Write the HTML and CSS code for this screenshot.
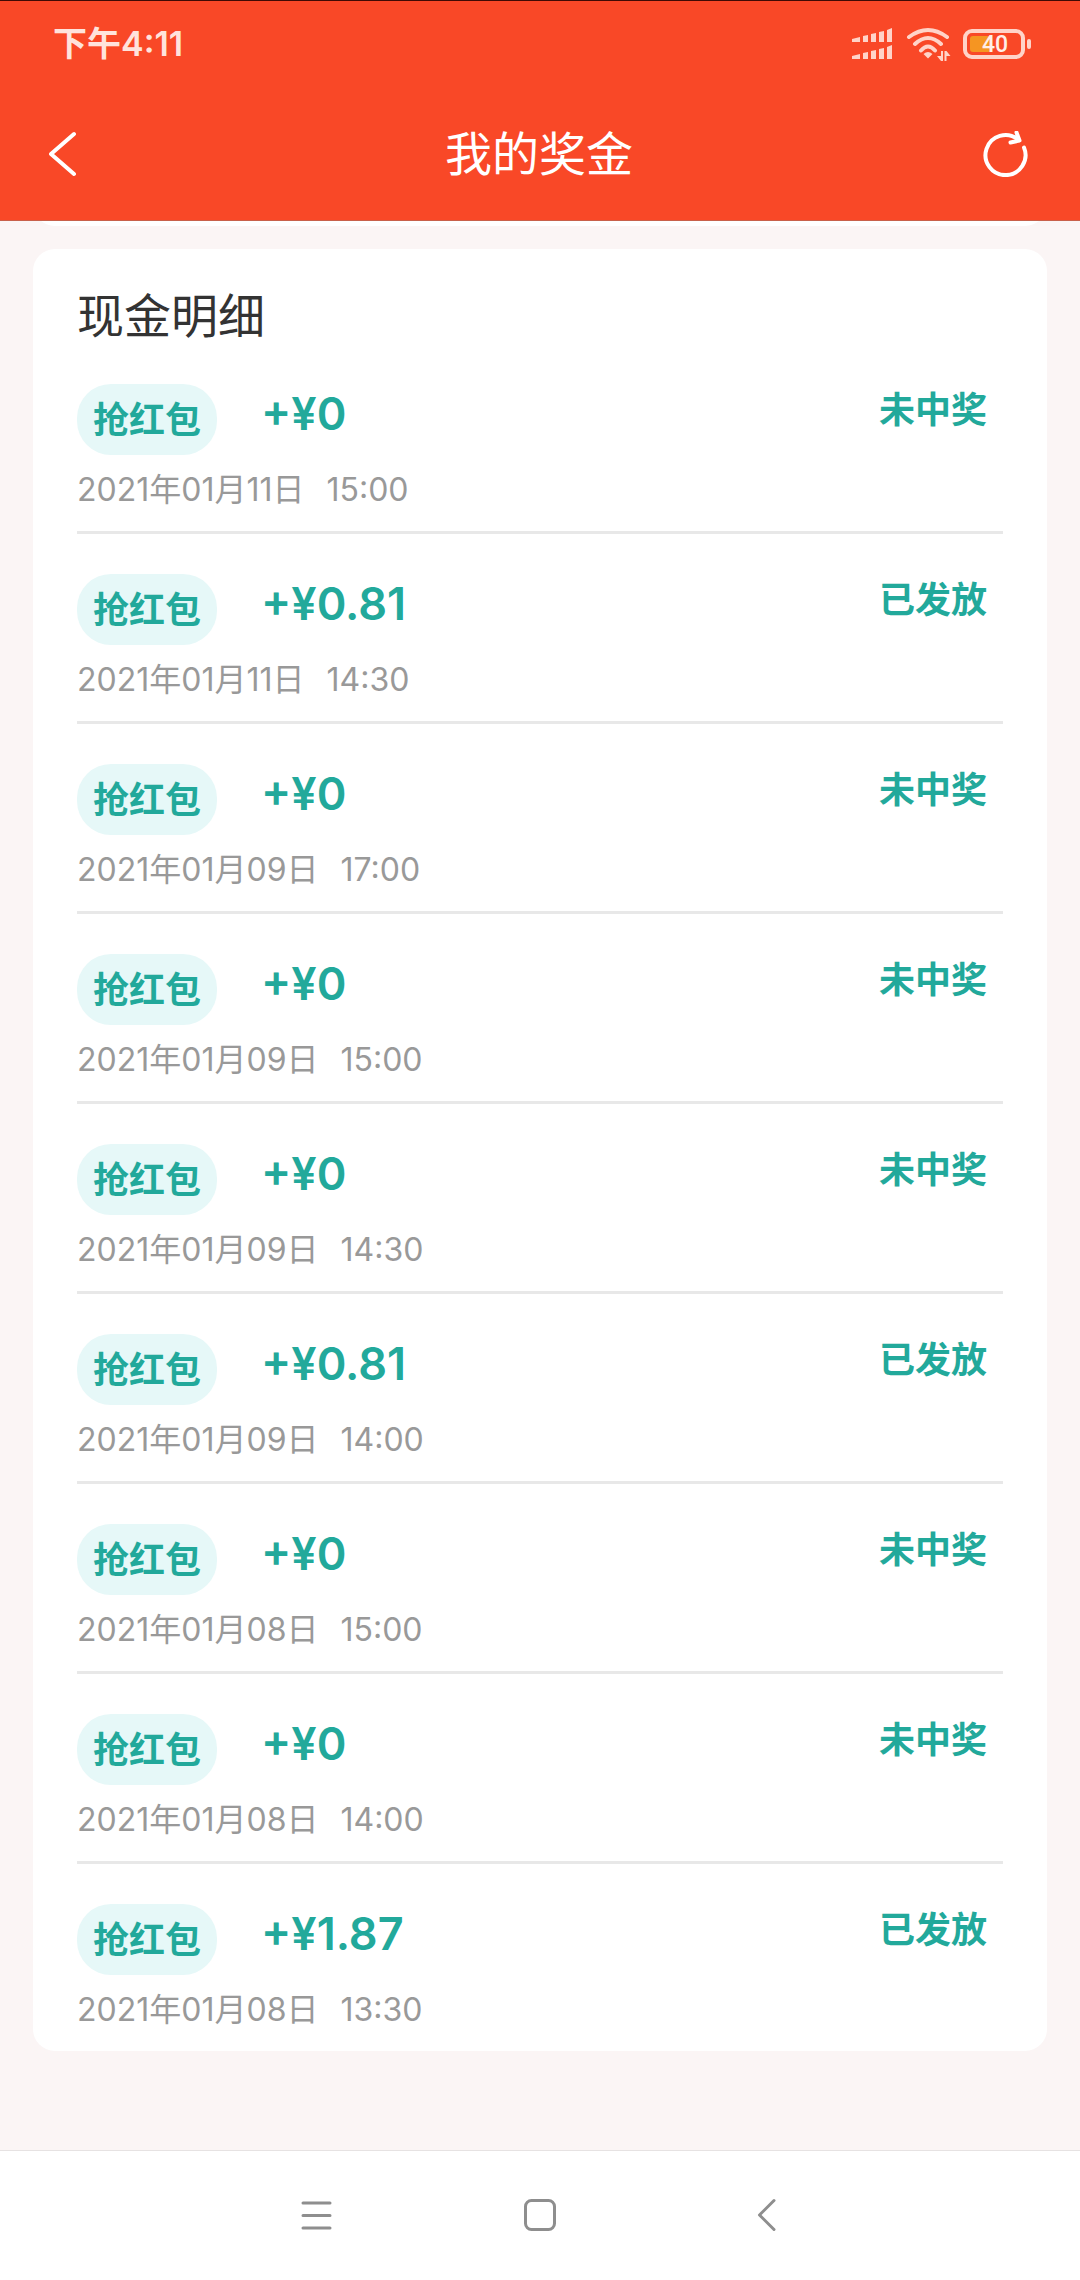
FILE: index.html
```html
<!DOCTYPE html>
<html lang="zh-CN">
<head>
<meta charset="utf-8">
<meta name="viewport" content="width=device-width, initial-scale=1">
<title>我的奖金</title>
<link rel="stylesheet" href="styles.css">
</head>
<body>
<header class="header">
  <div class="statusbar">
    <span class="clock">下午4:11</span>
    <div class="indicators">
      <svg class="signal" width="42" height="32" viewBox="0 0 42 32" aria-hidden="true">
        <path d="M0 11l8-2v5H0zM11 8l5-1v7h-5zM19 6l5-1v9h-5zM27 4l5-1v11h-5zM35 2l5-2v14h-5zM0 28l8-2v5H0zM11 25l5-1v7h-5zM19 23l5-1v9h-5zM27 21l5-1v11h-5zM35 19l5-2v14h-5z"/>
      </svg>
      <svg class="wifi" width="45" height="34" viewBox="0 0 45 34" aria-hidden="true">
        <path d="M3 10Q22-4 41 10M9 17Q22 5 35 17M15 23.500Q22 15.500 29 23.500"/>
        <path class="solid" d="M17.500 27Q22 23 26.500 27L22 31.500zM37 24v10h-2l-4-5h4v-5zM38.500 24h2l4 5h-4v5h-2z"/>
      </svg>
      <svg class="battery" width="70" height="32" viewBox="0 0 70 32" role="img" aria-label="40%">
        <rect class="shell" x="2" y="3" width="58" height="26" rx="7"/>
        <rect class="nub" x="64" y="11" width="4" height="10" rx="2"/>
        <path class="charge" d="M10 8h17v16H10q-3 0-3-3V11q0-3 3-3z"/>
        <text class="level" x="32" y="24" text-anchor="middle">40</text>
      </svg>
    </div>
  </div>
  <div class="appbar">
    <button class="iconbtn" type="button" aria-label="返回">
      <svg width="46" height="46" viewBox="0 0 46 46"><path d="M25 3L2 23L25 43"/></svg>
    </button>
    <h1 class="title">我的奖金</h1>
    <button class="iconbtn" type="button" aria-label="刷新">
      <svg width="46" height="46" viewBox="0 0 46 46"><path d="M41 16.500A20 20 0 1 1 35 8.500M33.500 1.500L36.500 9.500L27.500 11.500"/></svg>
    </button>
  </div>
</header>

<main class="content">
  <div class="peek"><div class="card summary"></div></div>
  <section class="card">
    <h2 class="heading">现金明细</h2>
    <ul class="records">
      <li class="record">
        <div class="line"><span class="tag">抢红包</span><strong class="amount">+¥0</strong><span class="state">未中奖</span></div>
        <p class="when"><span>2021年01月11日</span><span>15:00</span></p>
      </li>
      <li class="record">
        <div class="line"><span class="tag">抢红包</span><strong class="amount">+¥0.81</strong><span class="state">已发放</span></div>
        <p class="when"><span>2021年01月11日</span><span>14:30</span></p>
      </li>
      <li class="record">
        <div class="line"><span class="tag">抢红包</span><strong class="amount">+¥0</strong><span class="state">未中奖</span></div>
        <p class="when"><span>2021年01月09日</span><span>17:00</span></p>
      </li>
      <li class="record">
        <div class="line"><span class="tag">抢红包</span><strong class="amount">+¥0</strong><span class="state">未中奖</span></div>
        <p class="when"><span>2021年01月09日</span><span>15:00</span></p>
      </li>
      <li class="record">
        <div class="line"><span class="tag">抢红包</span><strong class="amount">+¥0</strong><span class="state">未中奖</span></div>
        <p class="when"><span>2021年01月09日</span><span>14:30</span></p>
      </li>
      <li class="record">
        <div class="line"><span class="tag">抢红包</span><strong class="amount">+¥0.81</strong><span class="state">已发放</span></div>
        <p class="when"><span>2021年01月09日</span><span>14:00</span></p>
      </li>
      <li class="record">
        <div class="line"><span class="tag">抢红包</span><strong class="amount">+¥0</strong><span class="state">未中奖</span></div>
        <p class="when"><span>2021年01月08日</span><span>15:00</span></p>
      </li>
      <li class="record">
        <div class="line"><span class="tag">抢红包</span><strong class="amount">+¥0</strong><span class="state">未中奖</span></div>
        <p class="when"><span>2021年01月08日</span><span>14:00</span></p>
      </li>
      <li class="record">
        <div class="line"><span class="tag">抢红包</span><strong class="amount">+¥1.87</strong><span class="state">已发放</span></div>
        <p class="when"><span>2021年01月08日</span><span>13:30</span></p>
      </li>
    </ul>
  </section>
</main>

<nav class="navbar" aria-label="系统导航">
  <button class="navbtn" type="button" aria-label="菜单">
    <svg width="36" height="36" viewBox="0 0 36 36"><path d="M6 5h27M6 17.500h27M6 30h27"/></svg>
  </button>
  <button class="navbtn" type="button" aria-label="主屏幕">
    <svg width="36" height="36" viewBox="0 0 36 36"><rect x="3.500" y="2.500" width="29" height="29" rx="6"/></svg>
  </button>
  <button class="navbtn" type="button" aria-label="返回">
    <svg width="36" height="36" viewBox="0 0 36 36"><path d="M27 2.500L12.500 17L27 31.500"/></svg>
  </button>
</nav>
</body>
</html>
```
FILE: styles.css
```css
* {
  box-sizing: border-box;
}

body {
  margin: 0;
  min-height: 100vh;
  display: flex;
  flex-direction: column;
  background: #fbf5f5;
  color: #333;
  font-family: Inter, "Noto Sans CJK SC", sans-serif;
}

h1, h2, p, ul {
  margin: 0;
  padding: 0;
}

button {
  margin: 0;
  padding: 0;
  border: 0;
  background: none;
}

svg {
  display: block;
  fill: none;
  stroke-linecap: round;
  stroke-linejoin: round;
}

.header {
  background: #f94827;
  border-top: 1px solid #400a04;
  border-bottom: 1px solid #c8604a;
  color: #fff;
}

.statusbar {
  display: flex;
  align-items: center;
  justify-content: space-between;
  height: 86px;
  padding: 0 47px 0 53px;
  color: #ffe3dc;
}

.clock {
  font-size: 34px;
  font-weight: 600;
  line-height: 40px;
}

.indicators {
  display: flex;
  align-items: center;
  gap: 12px;
}

.signal,
.nub {
  fill: #ffd3c8;
}

.wifi {
  stroke: #ffd3c8;
  stroke-width: 4;
}

.solid {
  fill: #ffd3c8;
  stroke: none;
}

.shell {
  stroke: #ffd3c8;
  stroke-width: 4;
}

.charge {
  fill: #f59522;
}

.level {
  fill: #ffeee8;
  font-family: Roboto, sans-serif;
  font-size: 23px;
  font-weight: 500;
}

.appbar {
  display: flex;
  align-items: center;
  justify-content: space-between;
  height: 133px;
  padding: 0 51px 0 49px;
}

.iconbtn svg {
  stroke: #fff;
  stroke-width: 4;
}

.title,
.heading {
  font-size: 47px;
  font-weight: 400;
  line-height: 56px;
}

.content {
  flex: 1;
  padding: 0 33px 97px;
}

.peek {
  display: flex;
  align-items: flex-end;
  height: 5px;
  margin-bottom: 23px;
  overflow: hidden;
}

.card {
  padding: 39px 44px 0;
  border-radius: 22px;
  background: #fff;
}

.summary {
  flex: 1;
  height: 60px;
}

.records {
  list-style: none;
}

.record {
  padding: 40px 0 19px;
  border-bottom: 3px solid #e8e8e8;
}

.record:last-child {
  border-bottom: 0;
}

.line {
  display: flex;
  align-items: flex-start;
  color: #22a99b;
}

.tag {
  margin-right: 44px;
  padding: 2px 16px 0;
  border-radius: 34px;
  background: #e6f8f8;
  font-size: 36px;
  font-weight: 700;
  line-height: 69px;
}

.amount {
  font-size: 45px;
  font-weight: 600;
  line-height: 60px;
}

.state {
  margin-left: auto;
  padding-right: 16px;
  font-size: 36px;
  font-weight: 700;
  line-height: 52px;
}

.when {
  display: flex;
  gap: 22px;
  margin-top: 13px;
  color: #999;
  font-size: 32px;
  line-height: 44px;
}

.navbar {
  display: flex;
  justify-content: center;
  border-top: 1px solid #e6e2e2;
  background: #fff;
}

.navbtn {
  display: flex;
  align-items: center;
  justify-content: center;
  width: 225px;
  height: 129px;
}

.navbtn svg {
  stroke: #8e8e8e;
  stroke-width: 3;
}
```
